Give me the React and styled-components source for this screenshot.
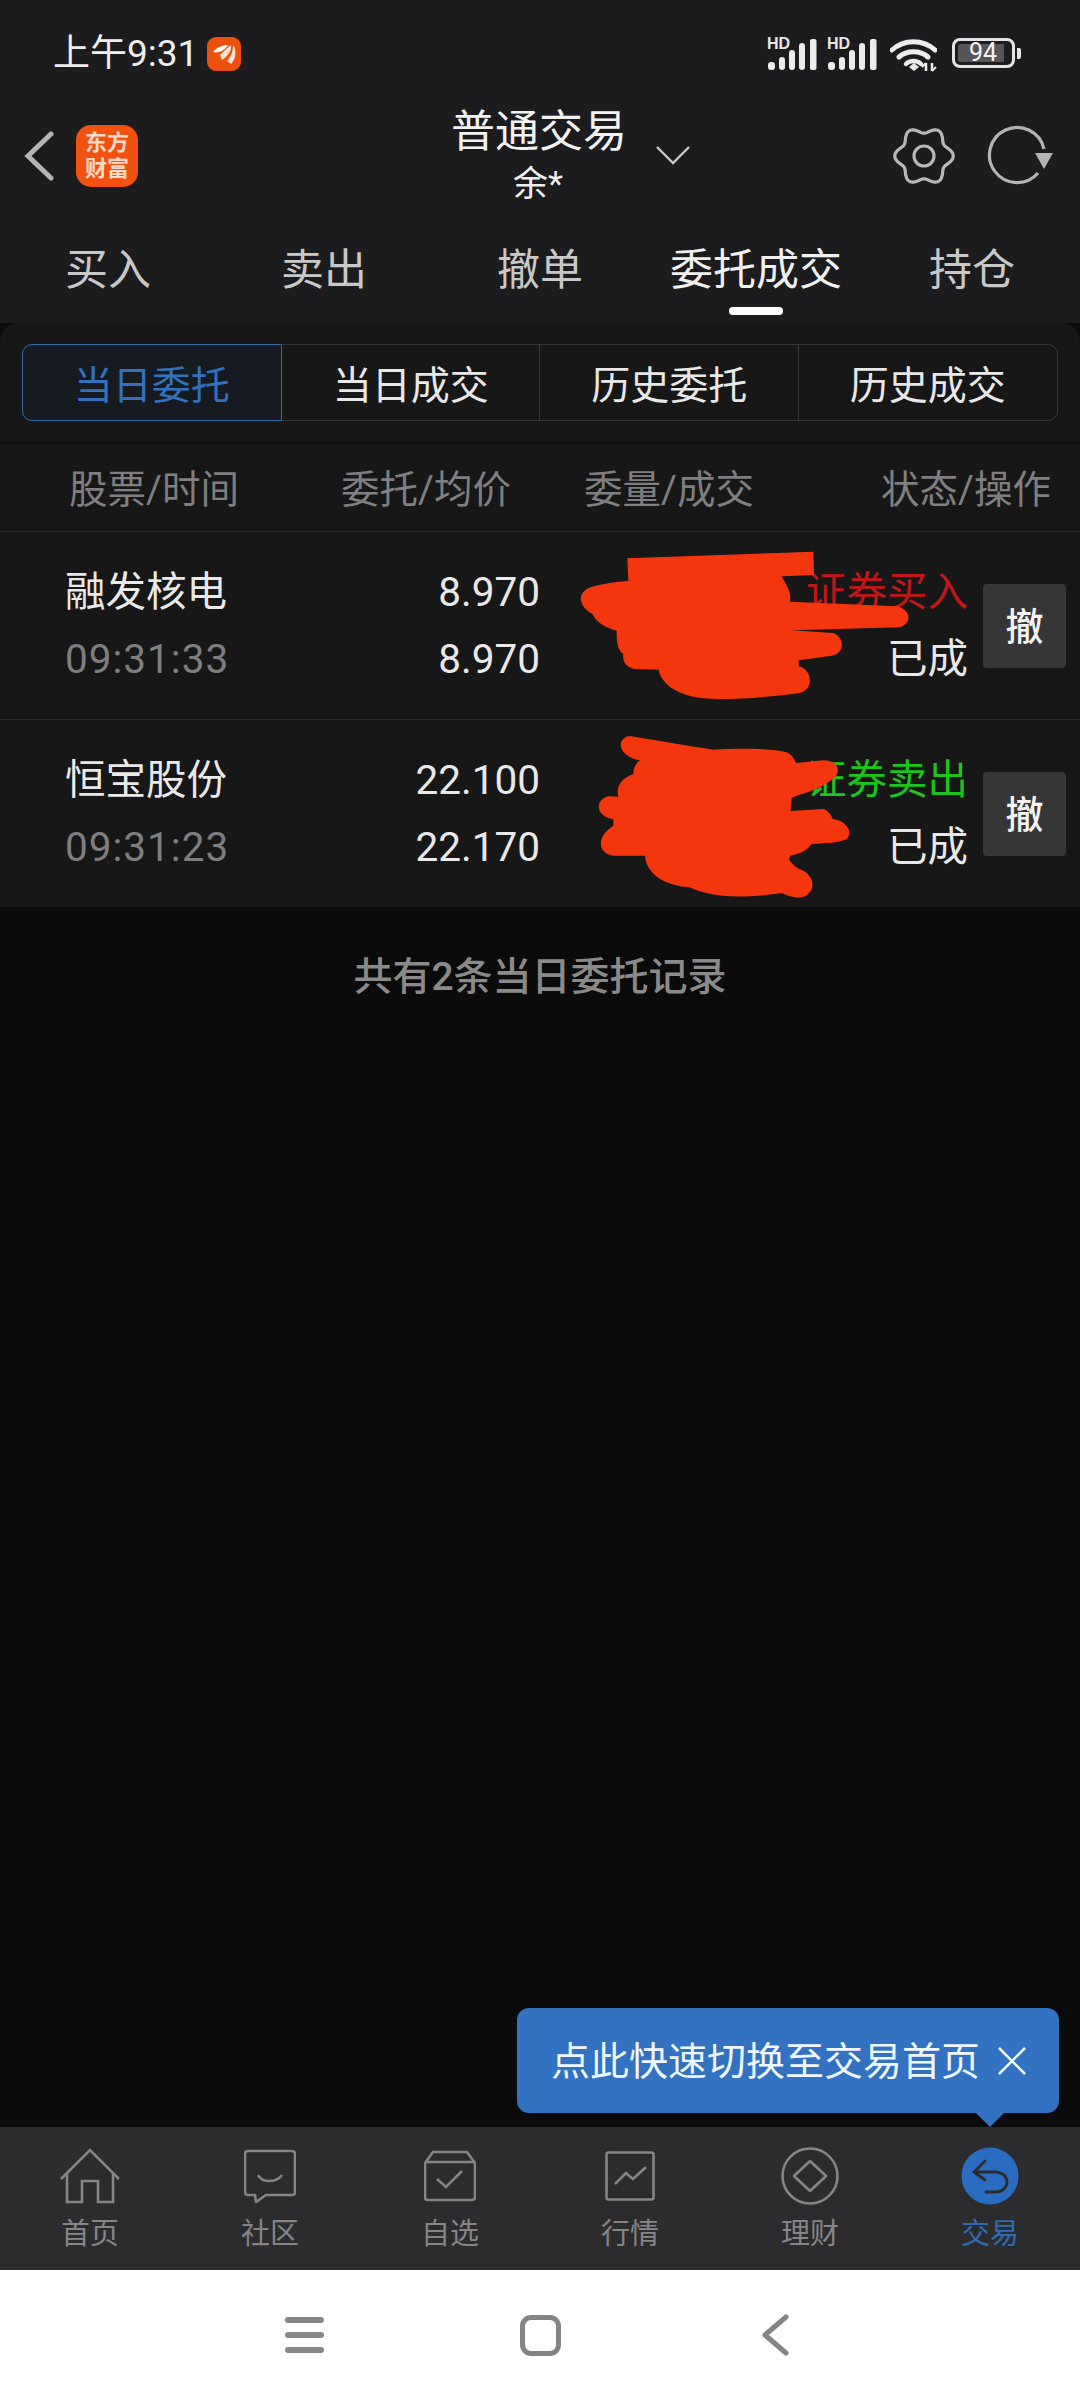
import React from "react";
import styled, { createGlobalStyle } from "styled-components";

const GlobalStyle = createGlobalStyle`
  html, body {
    margin: 0;
    padding: 0;
    background: #0b0b0b;
  }
  * {
    box-sizing: border-box;
  }
`;

const Page = styled.div`
  position: relative;
  width: 1080px;
  height: 2400px;
  display: flex;
  flex-direction: column;
  overflow: hidden;
  background: #0b0b0b;
  font-family: Roboto, "Noto Sans CJK SC", sans-serif;
  color: #eee;
`;

const Top = styled.div`
  background: #1c1c1e;
`;

const StatusBar = styled.div`
  height: 90px;
  padding: 36px 59px 0 53px;
  display: flex;
  justify-content: space-between;
  align-items: flex-start;
`;

const StatusLeft = styled.div`
  display: flex;
  align-items: center;
  gap: 9px;
`;

const Clock = styled.span`
  font-size: 37px;
  line-height: 36px;
  font-weight: 400;
  color: #eee;
`;

const StatusRight = styled.div`
  display: flex;
  align-items: flex-start;
  gap: 10px;
  padding-top: 2px;
`;

const SignalBox = styled.div`
  position: relative;
  width: 50px;
  height: 32px;
`;

const HdTag = styled.span`
  position: absolute;
  left: 0;
  top: -2px;
  font-family: "Liberation Sans", sans-serif;
  font-size: 16px;
  line-height: 15px;
  font-weight: 700;
  color: #e6e6e6;
`;

const WifiSlot = styled.div`
  margin-left: 3px;
`;

const Battery = styled.div`
  display: flex;
  align-items: center;
  gap: 2px;
  margin-left: 5px;
`;

const BatteryShell = styled.div`
  width: 63px;
  height: 30px;
  border: 3px solid #e4e4e4;
  border-radius: 8px;
  padding: 3px;
`;

const BatteryLevel = styled.div`
  width: 46px;
  height: 18px;
  background: #56565a;
  border-radius: 2px 0 0 2px;
  color: #f4f4f4;
  font-size: 25px;
  line-height: 18px;
  text-align: center;
  padding-left: 4px;
`;

const BatteryNub = styled.div`
  width: 4px;
  height: 11px;
  background: #e4e4e4;
  border-radius: 0 2px 2px 0;
`;

const Header = styled.div`
  height: 125px;
  display: grid;
  grid-template-columns: 453px 172px 1fr;
`;

const HeaderLeft = styled.div`
  display: flex;
  align-items: center;
  padding: 6px 0 0 24px;
  gap: 22px;
  height: 125px;
`;

const Logo = styled.div`
  width: 62px;
  height: 62px;
  border-radius: 15px;
  background: #f2520f;
  color: #fbd9c8;
  font-size: 22px;
  line-height: 26px;
  font-weight: 700;
  display: flex;
  align-items: center;
  justify-content: center;
  text-align: center;
`;

const TitleBlock = styled.div`
  display: flex;
  flex-direction: column;
  align-items: center;
  padding-top: 19px;
`;

const Title = styled.div`
  font-size: 44px;
  line-height: 46px;
  white-space: nowrap;
  color: #f2f2f2;
`;

const SubTitle = styled.div`
  font-size: 35px;
  line-height: 40px;
  margin-top: 10px;
  margin-right: 2px;
  white-space: nowrap;
  color: #eee;
`;

const HeaderRight = styled.div`
  display: flex;
  align-items: center;
  height: 125px;
  padding: 6px 26px 0 31px;
  justify-content: space-between;
`;

const HeaderIcons = styled.div`
  display: flex;
  align-items: center;
  gap: 31px;
`;

const Tabs = styled.div`
  display: grid;
  grid-template-columns: repeat(5, 1fr);
  height: 108px;
`;

const Tab = styled.div`
  position: relative;
  text-align: center;
  font-size: 43px;
  line-height: 50px;
  padding-top: 30px;
  color: ${(p) => (p.$active ? "#f0f0f0" : "#c8c8c8")};
`;

const TabMark = styled.span`
  position: absolute;
  left: 50%;
  top: 92px;
  width: 54px;
  height: 8px;
  margin-left: -27px;
  border-radius: 4px;
  background: #fff;
`;

const Main = styled.div`
  flex: 1;
  background: #0b0b0b;
`;

const Panel = styled.div`
  position: relative;
  background: #171718;
  border-radius: 20px 20px 0 0;
  margin-top: -1px;
`;

const SegmentWrap = styled.div`
  padding: 22px 22px 21px;
  border-bottom: 2px solid #0e0e0e;
`;

const Segment = styled.div`
  display: grid;
  grid-template-columns: repeat(4, 1fr);
  height: 77px;
  border: 1px solid #38383a;
  border-radius: 10px;
`;

const SegmentItem = styled.div`
  display: flex;
  align-items: center;
  justify-content: center;
  margin: -1px 0;
  padding-bottom: 2px;
  font-size: 39px;
  color: ${(p) => (p.$active ? "#3371bd" : "#e8e8e8")};
  background: ${(p) => (p.$active ? "#161b22" : "transparent")};
  border: 1px solid ${(p) => (p.$active ? "#35689f" : "transparent")};
  border-right-color: ${(p) =>
    p.$active ? "#35689f" : p.$last ? "transparent" : "#38383a"};
  border-radius: ${(p) => (p.$active ? "10px 0 0 10px" : "0")};
  margin-left: ${(p) => (p.$active ? "-1px" : "0")};
`;

const ColumnHead = styled.div`
  display: grid;
  grid-template-columns: 272px 243px 297px auto;
  height: 88px;
  align-items: center;
  padding: 0 0 3px 69px;
  border-bottom: 1px solid #2a2a2c;
  font-size: 38.5px;
  color: #7f7f81;
  white-space: nowrap;
`;

const Row = styled.div`
  display: grid;
  grid-template-columns: 275px 200px 1fr 83px;
  height: ${(p) => (p.$last ? "187px" : "188px")};
  align-items: center;
  padding: 0 14px 0 65px;
  border-bottom: ${(p) => (p.$last ? "none" : "1px solid #2a2a2c")};
`;

const Cell = styled.div`
  display: flex;
  flex-direction: column;
  padding-top: 1px;
  text-align: ${(p) => (p.$right ? "right" : "left")};
  padding-right: ${(p) => (p.$gap ? "15px" : "0")};
`;

const Line = styled.div`
  font-size: 40.5px;
  line-height: 67px;
  white-space: nowrap;
  color: ${(p) => p.$color || "#e9e9e9"};
  letter-spacing: ${(p) => (p.$wide ? "1px" : "0")};
`;

const CancelButton = styled.div`
  width: 83px;
  height: 84px;
  border-radius: 4px;
  background: #363637;
  color: #f4f4f4;
  font-size: 38px;
  font-weight: 500;
  padding-bottom: 4px;
  display: flex;
  align-items: center;
  justify-content: center;
`;

const Scribble = styled.svg`
  position: absolute;
  left: 560px;
  top: 207px;
`;

const Note = styled.div`
  margin-top: 45px;
  text-align: center;
  font-size: 39px;
  line-height: 50px;
  font-weight: 500;
  color: #8a8a8a;
`;

const BottomNav = styled.div`
  position: relative;
  display: grid;
  grid-template-columns: repeat(6, 1fr);
  height: 143px;
  background: #2c2c2e;
`;

const NavItem = styled.div`
  display: flex;
  flex-direction: column;
  align-items: center;
  padding-top: 20px;
  color: ${(p) => (p.$active ? "#2f6cb5" : "#858587")};
  font-size: 29px;
  line-height: 34px;
`;

const NavIcon = styled.div`
  height: 58px;
  display: flex;
  align-items: center;
  justify-content: center;
  margin-bottom: 12px;
`;

const Tip = styled.div`
  position: absolute;
  left: 517px;
  top: -119px;
  width: 542px;
  height: 105px;
  background: #3372c0;
  border-radius: 12px;
  display: flex;
  align-items: center;
  justify-content: space-between;
  padding: 0 33px 5px 34px;
  color: #eef6ff;
  font-size: 39px;
  white-space: nowrap;
  svg {
    margin-top: 5px;
  }
  &::after {
    content: "";
    position: absolute;
    left: 459px;
    bottom: -14px;
    border-left: 14px solid transparent;
    border-right: 14px solid transparent;
    border-top: 14px solid #3372c0;
  }
`;

const SystemBar = styled.div`
  height: 130px;
  background: #fff;
  display: grid;
  grid-template-columns: repeat(3, 235px);
  justify-content: center;
  justify-items: center;
  align-items: center;
`;

const MenuLines = styled.div`
  width: 39px;
  display: flex;
  flex-direction: column;
  gap: 9px;
  margin-left: -2px;
  span {
    display: block;
    height: 6px;
    border-radius: 3px;
    background: #888;
  }
`;

const HomeSquare = styled.div`
  width: 41px;
  height: 41px;
  border: 5px solid #848484;
  border-radius: 11px;
`;

function NotifyIcon() {
  return (
    <svg width="34" height="34" viewBox="0 0 34 34">
      <rect width="34" height="34" rx="9" fill="#ec500f" />
      <path d="M6 15 C10 10 16 8 21 8 C19 12 12 17 6 15 Z" fill="#fff" />
      <path d="M13 18 C17 14 21 10 24 8 C25 13 21 19 15 23 Z" fill="#fbe3d6" />
      <path d="M20 24 C25 19 26 13 26 8 C30 13 29 22 24 27 Z" fill="#fbe3d6" />
    </svg>
  );
}

function SignalIcon() {
  return (
    <SignalBox>
      <HdTag>HD</HdTag>
      <svg width="50" height="32" viewBox="0 0 50 32" fill="#ececec">
        <rect x="1" y="24" width="7" height="8" rx="3" />
        <rect x="12" y="19" width="6" height="13" rx="3" />
        <rect x="22" y="12" width="6" height="20" rx="3" />
        <rect x="32" y="5" width="6" height="27" rx="3" />
        <rect x="43" y="1" width="6.5" height="31" rx="2" />
      </svg>
    </SignalBox>
  );
}

function WifiIcon() {
  return (
    <svg width="47" height="34" viewBox="0 0 47 34" fill="none" stroke="#ececec">
      <path d="M2 12 C14 1 33 1 45 12" strokeWidth="5" strokeLinecap="round" />
      <path d="M9 19 C17 12 30 12 38 19" strokeWidth="5" strokeLinecap="round" />
      <path d="M16 26 C20 22 27 22 31 26" strokeWidth="4.5" strokeLinecap="round" />
      <path d="M19 29 L24 25 L29 29 L24 33 Z" fill="#ececec" stroke="none" />
      <path d="M36 25 V33 M42 25 V33" strokeWidth="2.5" />
      <path d="M32 29 L36 25 M46 29 L42 33" strokeWidth="2" />
    </svg>
  );
}

function gearPath() {
  const cx = 31;
  const cy = 30;
  const pts = [];
  for (let i = 0; i <= 180; i++) {
    const a = (i / 180) * Math.PI * 2;
    const r = 26 + 3.2 * Math.cos(6 * a);
    pts.push(`${(cx + r * Math.cos(a)).toFixed(2)} ${(cy + r * Math.sin(a)).toFixed(2)}`);
  }
  return "M" + pts.join(" L") + " Z";
}

function GearIcon() {
  return (
    <svg width="62" height="60" viewBox="0 0 62 60" fill="none" stroke="#b8b8b8" strokeWidth="3.2">
      <path d={gearPath()} strokeLinejoin="round" />
      <circle cx="31" cy="30" r="10" />
    </svg>
  );
}

function RefreshIcon() {
  return (
    <svg width="68" height="62" viewBox="0 0 68 62" fill="none">
      <path d="M52 48 A27.6 27.6 0 1 1 58 24" stroke="#b4b4b4" strokeWidth="3.2" />
      <path d="M49 28 H67 L58 44 Z" fill="#b4b4b4" />
    </svg>
  );
}

const navIconStroke = {
  fill: "none",
  stroke: "#858587",
  strokeWidth: 2.6,
};

const HomeGlyph = () => (
  <svg width="60" height="56" viewBox="0 0 60 56" {...navIconStroke}>
    <path d="M1 31 L30 2 L59 31 M7 25 V54 H22 V33 H38 V54 H53 V25" />
  </svg>
);

const ChatGlyph = () => (
  <svg width="52" height="54" viewBox="0 0 52 54" {...navIconStroke}>
    <path d="M4 2 H48 Q51 2 51 5 V44 Q51 46 48 46 H22 L12 53 L11 46 H4 Q1 46 1 43 V5 Q1 2 4 2 Z" />
    <path d="M14 26 C18 34 32 34 38 26" />
  </svg>
);

const BoxGlyph = () => (
  <svg width="52" height="52" viewBox="0 0 52 52" {...navIconStroke}>
    <path d="M1 13 L9 2 H43 L51 13 V47 Q51 50 48 50 H4 Q1 50 1 47 Z" />
    <path d="M1 12 H51" />
    <path d="M13 29 L22 37 L38 21" />
  </svg>
);

const TrendGlyph = () => (
  <svg width="50" height="50" viewBox="0 0 50 50" {...navIconStroke}>
    <rect x="1.5" y="1.5" width="47" height="47" rx="2" />
    <path d="M10 33 L21 22 L28 28 L41 16" />
  </svg>
);

const WealthGlyph = () => (
  <svg width="58" height="58" viewBox="0 0 58 58" {...navIconStroke}>
    <circle cx="29" cy="29" r="27.5" />
    <path d="M29 14 L45 29 L29 44 L13 29 Z" strokeLinejoin="round" />
  </svg>
);

const TradeGlyph = () => (
  <svg width="58" height="58" viewBox="0 0 58 58">
    <circle cx="29" cy="29" r="28.5" fill="#2a6cc0" />
    <path
      d="M24 14 L13 25 L24 33 M13 25 H34 C50 25 50 45 34 45 H25"
      fill="none"
      stroke="#2c2c2e"
      strokeWidth="2.8"
      strokeLinecap="round"
    />
  </svg>
);

const navItems = [
  { label: "首页", Icon: HomeGlyph },
  { label: "社区", Icon: ChatGlyph },
  { label: "自选", Icon: BoxGlyph },
  { label: "行情", Icon: TrendGlyph },
  { label: "理财", Icon: WealthGlyph },
  { label: "交易", Icon: TradeGlyph, active: true },
];

const tabs = ["买入", "卖出", "撤单", "委托成交", "持仓"];
const segments = ["当日委托", "当日成交", "历史委托", "历史成交"];

const orders = [
  { name: "融发核电", time: "09:31:33", price: "8.970", avg: "8.970", side: "证券买入", color: "#c01818" },
  { name: "恒宝股份", time: "09:31:23", price: "22.100", avg: "22.170", side: "证券卖出", color: "#1cc41c" },
];

export default function App() {
  return (
    <Page>
      <GlobalStyle />
      <Top>
        <StatusBar>
          <StatusLeft>
            <Clock>上午9:31</Clock>
            <NotifyIcon />
          </StatusLeft>
          <StatusRight>
            <SignalIcon />
            <SignalIcon />
            <WifiSlot>
              <WifiIcon />
            </WifiSlot>
            <Battery>
              <BatteryShell>
                <BatteryLevel>94</BatteryLevel>
              </BatteryShell>
              <BatteryNub />
            </Battery>
          </StatusRight>
        </StatusBar>
        <Header>
          <HeaderLeft>
            <svg width="30" height="50" viewBox="0 0 30 50" fill="none">
              <path d="M27 3 L4 25 L27 47" stroke="#b4b4b4" strokeWidth="5" strokeLinecap="round" />
            </svg>
            <Logo>
              东方
              <br />
              财富
            </Logo>
          </HeaderLeft>
          <TitleBlock>
            <Title>普通交易</Title>
            <SubTitle>余*</SubTitle>
          </TitleBlock>
          <HeaderRight>
            <svg width="34" height="19" viewBox="0 0 34 19" fill="none">
              <path d="M1 1 L17 17 L33 1" stroke="#c8c8c8" strokeWidth="2.4" />
            </svg>
            <HeaderIcons>
              <GearIcon />
              <RefreshIcon />
            </HeaderIcons>
          </HeaderRight>
        </Header>
        <Tabs>
          {tabs.map((t, i) => (
            <Tab key={t} $active={i === 3}>
              {t}
              {i === 3 && <TabMark />}
            </Tab>
          ))}
        </Tabs>
      </Top>
      <Main>
        <Panel>
          <SegmentWrap>
            <Segment>
              {segments.map((s, i) => (
                <SegmentItem key={s} $active={i === 0} $last={i === 3}>
                  {s}
                </SegmentItem>
              ))}
            </Segment>
          </SegmentWrap>
          <ColumnHead>
            <span>股票/时间</span>
            <span>委托/均价</span>
            <span>委量/成交</span>
            <span>状态/操作</span>
          </ColumnHead>
          {orders.map((o, i) => (
            <Row key={o.name} $last={i === orders.length - 1}>
              <Cell>
                <Line>{o.name}</Line>
                <Line $color="#7e7e80" $wide>
                  {o.time}
                </Line>
              </Cell>
              <Cell $right>
                <Line>{o.price}</Line>
                <Line>{o.avg}</Line>
              </Cell>
              <Cell $right $gap>
                <Line $color={o.color}>{o.side}</Line>
                <Line>已成</Line>
              </Cell>
              <CancelButton>撤</CancelButton>
            </Row>
          ))}
          <Scribble width="380" height="380" viewBox="0 0 1140 1140" fill="#f4360f">
            <path d="M202 88 L760 68 L762 138 L665 142 C680 170 695 190 690 218 L1010 232 C1050 240 1060 280 1020 295 L695 304 L820 312 C855 325 855 375 815 380 L716 394 L716 412 C755 420 765 480 720 492 C620 505 500 515 430 508 C360 500 305 470 296 422 L225 420 C200 418 185 395 190 375 C170 360 170 330 170 305 C130 295 105 275 98 255 C60 235 50 200 80 180 C110 165 160 160 205 155 Z" />
            <path d="M215 622 C290 635 380 650 460 662 C540 658 640 658 680 670 C700 680 705 695 708 702 L790 694 C830 694 845 720 825 745 C790 775 745 790 695 806 L692 846 L790 840 C805 845 815 860 818 870 C860 875 880 910 860 930 C840 942 800 942 755 945 C740 965 720 975 690 980 L688 992 C700 1010 715 1020 730 1025 C765 1045 770 1090 725 1105 C700 1108 680 1098 665 1092 C600 1102 500 1110 430 1090 C410 1085 400 1080 390 1075 C320 1070 260 1040 255 980 L160 980 C115 975 105 925 160 890 L160 870 C110 865 100 815 145 802 L175 803 C165 770 190 745 220 735 C220 715 230 700 240 694 C190 685 170 650 190 630 C198 622 205 622 215 622 Z" />
          </Scribble>
        </Panel>
        <Note>共有2条当日委托记录</Note>
      </Main>
      <BottomNav>
        {navItems.map(({ label, Icon, active }) => (
          <NavItem key={label} $active={active}>
            <NavIcon>
              <Icon />
            </NavIcon>
            {label}
          </NavItem>
        ))}
        <Tip>
          点此快速切换至交易首页
          <svg width="28" height="28" viewBox="0 0 28 28" fill="none">
            <path d="M1 1 L27 27 M27 1 L1 27" stroke="#eef6ff" strokeWidth="2.6" />
          </svg>
        </Tip>
      </BottomNav>
      <SystemBar>
        <MenuLines>
          <span />
          <span />
          <span />
        </MenuLines>
        <HomeSquare />
        <svg width="28" height="42" viewBox="0 0 28 42" fill="none">
          <path d="M25 3 L4 21 L25 39" stroke="#848484" strokeWidth="5" strokeLinecap="round" strokeLinejoin="round" />
        </svg>
      </SystemBar>
    </Page>
  );
}
